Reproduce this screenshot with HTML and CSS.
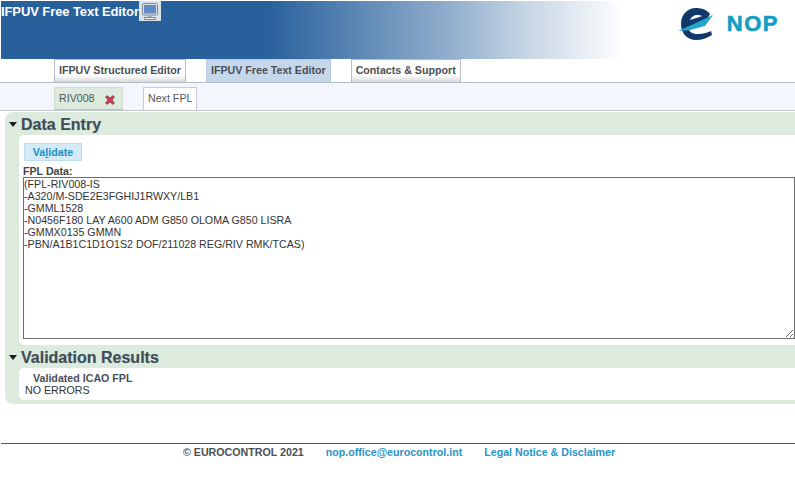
FILE: index.html
```html
<!DOCTYPE html>
<html lang="en">
<head>
<meta charset="utf-8">
<title>IFPUV Free Text Editor</title>
<link rel="stylesheet" href="styles.css">
</head>
<body>
<header class="banner">
  <h1 class="title">IFPUV Free Text Editor</h1>
  <span class="monitor">
    <svg width="22" height="20" viewBox="0 0 22 20">
      <rect x="3.500" y="2.500" width="15" height="11.500" rx="1" fill="#dbe2ea" stroke="#7f8a97"/>
      <rect x="5" y="4" width="12" height="8.500" fill="#5f8ac6"/>
      <path d="M9 14.500h4v1.500H9z" fill="#a9b1ba"/>
      <path d="M5.500 16.500h11v2h-11z" fill="#f4f5f7" stroke="#7d8794"/>
    </svg>
  </span>
  <div class="logo">
    <svg class="logo-mark" width="40" height="36" viewBox="0 0 40 36">
      <path d="M34 8C31 4 26 2 20 2 11 2 5 9 5 18 5 27 11 34 20 34 26 34 31 32 36 29L35 25C31 27 27 28 22 28 17 28 13.500 26 12.500 23L30 15 34 8Z" fill="#10396a"/>
      <path d="M14 14C15 11 18 9 21 9 23 9 25 9.500 26.500 10Z" fill="#fff"/>
      <path d="M2 25 20 17 37 9 29 20 14 24Z" fill="#23a6cd"/>
    </svg>
    <span class="logo-text">NOP</span>
  </div>
</header>

<nav class="main-tabs">
  <a class="main-tab">IFPUV Structured Editor</a>
  <a class="main-tab is-active">IFPUV Free Text Editor</a>
  <a class="main-tab">Contacts &amp; Support</a>
</nav>

<nav class="sub-tabs">
  <span class="sub-tab is-current">RIV008
    <svg class="close" width="10" height="10" viewBox="0 0 10 10">
      <path d="M2 0.500 5 3 8 0.500 9.500 2 7 5 9.500 8 8 9.500 5 7 2 9.500 0.500 8 3 5 0.500 2Z" fill="#cf3d55" stroke="#6e2a2e" stroke-width="0.600"/>
    </svg>
  </span>
  <span class="sub-tab">Next FPL</span>
</nav>

<main class="panel">
  <h2 class="section-title"><span class="caret"></span>Data Entry</h2>
  <section class="section-body entry">
    <button class="validate" type="button">Va<u>l</u>idate</button>
    <label class="field-label" for="fpl">FPL Data:</label>
    <textarea class="fpl" id="fpl" spellcheck="false">(FPL-RIV008-IS
-A320/M-SDE2E3FGHIJ1RWXY/LB1
-GMML1528
-N0456F180 LAY A600 ADM G850 OLOMA G850 LISRA
-GMMX0135 GMMN
-PBN/A1B1C1D1O1S2 DOF/211028 REG/RIV RMK/TCAS)</textarea>
  </section>
  <h2 class="section-title results-title"><span class="caret"></span>Validation Results</h2>
  <section class="section-body results">
    <div class="result-head">Validated ICAO FPL</div>
    <div class="result-line">NO ERRORS</div>
  </section>
</main>

<footer class="footer">
  <span class="copyright">© EUROCONTROL 2021</span>
  <a class="foot-link">nop.office@eurocontrol.int</a>
  <a class="foot-link">Legal Notice &amp; Disclaimer</a>
</footer>
</body>
</html>
```
FILE: styles.css
```css
* { box-sizing: border-box; }
html, body { margin: 0; padding: 0; }
body {
  width: 795px;
  height: 478px;
  overflow: hidden;
  background: #fff;
  font-family: "Liberation Sans", Arial, sans-serif;
  font-size: 10.67px;
  color: #333;
}
.banner {
  display: flex;
  align-items: flex-start;
  height: 58px;
  margin: 1px 0 0 1px;
  background: linear-gradient(to right, #28609c 0, #28609c 265px, #8fadcc 445px, #c9d7e5 530px, #fff 624px);
}
.title {
  margin: 3px 0 0;
  font-size: 13px;
  line-height: 16px;
  letter-spacing: -0.09px;
  font-weight: bold;
  color: #fff;
  white-space: nowrap;
}
.monitor {
  display: flex;
  align-items: center;
  justify-content: center;
  width: 22px;
  height: 20px;
  background: #d9e1ea;
}
.logo {
  display: flex;
  align-items: center;
  margin-left: auto;
  margin-right: 16px;
  margin-top: 5px;
  gap: 11px;
}
.logo-text {
  font-size: 22px;
  line-height: 24px;
  font-weight: bold;
  letter-spacing: 1.5px;
  color: #149dc4;
  -webkit-text-stroke: 0.6px #149dc4;
}
.main-tabs {
  display: flex;
  gap: 20px;
  height: 24px;
  padding-left: 54px;
  border-bottom: 1px solid #b4bcc4;
}
.main-tab {
  display: block;
  height: 23px;
  padding: 3px 4px 0;
  border: 1px solid #b9bdc2;
  border-bottom: 0;
  line-height: 14px;
  font-weight: bold;
  color: #4a4f55;
  background: linear-gradient(to bottom, #fff 0, #fff 70%, #d8d8d8 100%);
}
.main-tab.is-active {
  background: #c5d7ea;
  border-color: #b7c9dc;
}
.sub-tabs {
  display: flex;
  gap: 20px;
  height: 28px;
  padding: 4px 0 0 54px;
  background: #f3f6fc;
  border-bottom: 1px solid #c4c8cc;
}
.sub-tab {
  display: flex;
  align-items: flex-start;
  height: 23px;
  padding: 3px 4px 0;
  border: 1px solid #c9cdd2;
  border-bottom: 0;
  background: #fff;
  line-height: 14px;
  color: #555;
}
.sub-tab.is-current {
  width: 69px;
  background: #dcebdd;
  border-color: #cfdccf;
  border-bottom: 1px solid #b8c8b8;
}
.close { margin: 4px 0 0 10px; }
.panel {
  height: 292px;
  margin: 1px 0 0 5px;
  padding: 0 0 4px 14px;
  background: #dcebdd;
  border-radius: 8px 0 0 8px;
}
.section-title {
  display: flex;
  align-items: center;
  height: 23px;
  margin: 0 0 0 -10px;
  padding-top: 2px;
  font-size: 16px;
  line-height: 21px;
  font-weight: bold;
  color: #3f4d5a;
  -webkit-text-stroke: 0.2px #3f4d5a;
}
.caret {
  width: 0;
  height: 0;
  margin-right: 4px;
  border-left: 4.500px solid transparent;
  border-right: 4.500px solid transparent;
  border-top: 5px solid #1c1c1c;
}
.section-body {
  background: #fff;
  border-radius: 5px 0 0 5px;
}
.entry {
  display: flex;
  flex-direction: column;
  align-items: flex-start;
  height: 210px;
  padding: 8px 0 0 4px;
}
.validate {
  display: block;
  width: 58px;
  height: 18px;
  margin: 0 0 0 1px;
  padding: 0;
  border: 1px solid #bcdcf0;
  background: #d5eaf7;
  font-family: inherit;
  font-size: 10.67px;
  font-weight: bold;
  color: #1c8fc4;
}
.field-label {
  margin-top: 4px;
  line-height: 12px;
  font-weight: bold;
  color: #444;
}
.fpl {
  display: block;
  width: 772px;
  height: 162px;
  margin: 0;
  padding: 0;
  border: 1px solid #6f6f6f;
  border-radius: 0;
  outline: 0;
  font-family: inherit;
  font-size: 10.67px;
  line-height: 12px;
  color: #333;
  background: #fff;
  resize: both;
}
.results {
  height: 32px;
  padding: 4px 0 0 6px;
  line-height: 12px;
  color: #333;
}
.result-head { padding-left: 8px; font-weight: bold; color: #4a4f55; }
.footer {
  display: flex;
  gap: 22px;
  height: 20px;
  margin-top: 39px;
  margin-left: 1px;
  padding: 1px 0 0 182px;
  border-top: 1px solid #555;
  line-height: 14px;
  font-weight: bold;
}
.copyright { color: #4a4f55; }
.foot-link { color: #2a93c8; }
```
